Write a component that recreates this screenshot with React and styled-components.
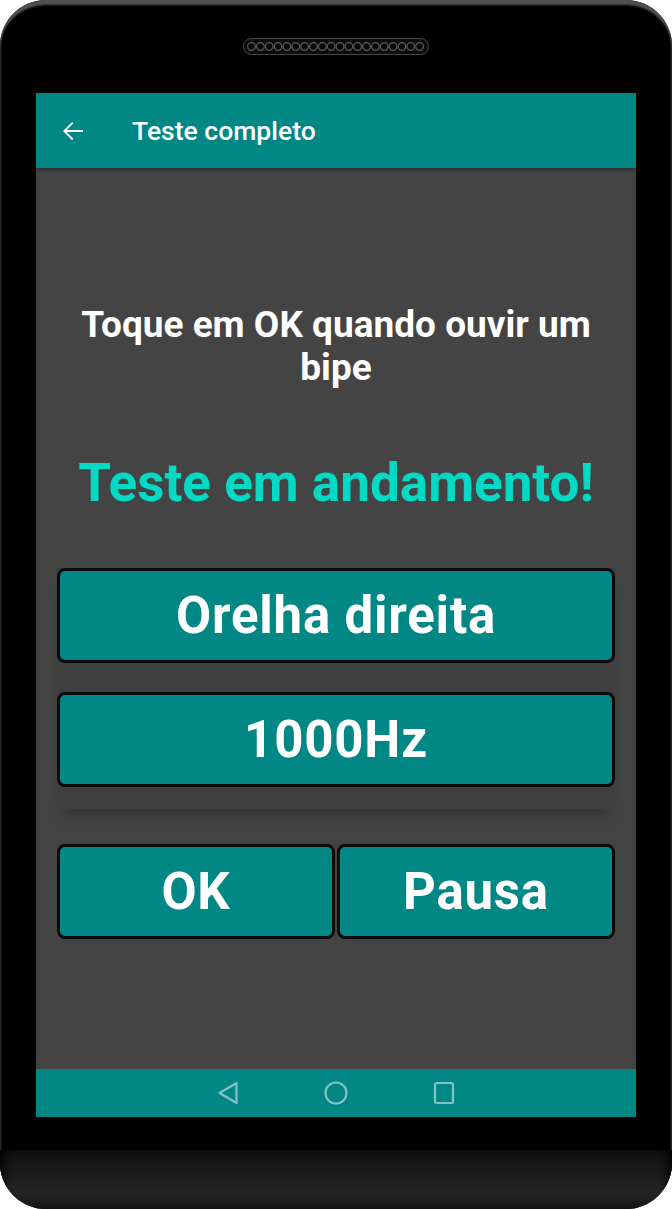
import React from "react";
import { createGlobalStyle, styled } from "styled-components";

const GlobalStyle = createGlobalStyle`
  html, body {
    margin: 0;
    padding: 0;
    background: #fff;
  }
  body {
    font-family: Roboto, "Noto Sans", sans-serif;
  }
`;

const Phone = styled.div`
  width: 672px;
  height: 1209px;
  box-sizing: border-box;
  display: flex;
  flex-direction: column;
  background: #000;
  border-radius: 46px;
  overflow: hidden;
  box-shadow: inset 0 6px 2px -1px #4f4f4f, inset 2px 0 2px -1px #3a3a3a,
    inset -2px 0 2px -1px #3a3a3a;
`;

const TopBezel = styled.div`
  height: 93px;
  flex-shrink: 0;
  display: flex;
  justify-content: center;
  padding-top: 38px;
  box-sizing: border-box;
`;

const Screen = styled.div`
  margin: 0 36px;
  height: 1024px;
  flex-shrink: 0;
  display: flex;
  flex-direction: column;
  background: #444444;
`;

const AppBar = styled.div`
  height: 75px;
  flex-shrink: 0;
  display: flex;
  align-items: center;
  background: #018784;
  color: #fff;
  box-shadow: 0 2px 4px rgba(0, 0, 0, 0.35);
  position: relative;
  z-index: 1;
`;

const BackButton = styled.div`
  width: 96px;
  display: flex;
  align-items: center;
  padding-left: 22px;
  box-sizing: border-box;
`;

const Title = styled.div`
  font-size: 26.5px;
  font-weight: 500;
`;

const Content = styled.div`
  flex: 1;
  display: flex;
  flex-direction: column;
  padding: 0 21px;
`;

const Prompt = styled.div`
  margin-top: 135px;
  text-align: center;
  color: #fff;
  font-size: 37px;
  font-weight: 700;
  line-height: 43px;
`;

const Status = styled.div`
  margin-top: 63px;
  text-align: center;
  color: #03dac5;
  font-size: 53px;
  font-weight: 700;
  line-height: 62px;
`;

const InfoCard = styled.div`
  margin-top: 54px;
  display: flex;
  flex-direction: column;
  gap: 29px;
  background: rgba(0, 0, 0, 0.07);
  box-shadow: 0 14px 14px -8px rgba(0, 0, 0, 0.28);
  padding-bottom: 22px;
`;

const Row = styled.div`
  margin-top: 35px;
  display: flex;
  gap: 2px;
`;

const TealButton = styled.div`
  flex: ${({ $grow }) => ($grow ? "1 1 0" : "0 0 auto")};
  height: 95px;
  box-sizing: border-box;
  display: flex;
  align-items: center;
  justify-content: center;
  background: #018784;
  border: 3px solid #0a0a0a;
  border-radius: 8px;
  color: #fff;
  font-size: 51px;
  letter-spacing: 0.8px;
  font-weight: 700;
`;

const NavBar = styled.div`
  height: 48px;
  flex-shrink: 0;
  display: flex;
  align-items: center;
  justify-content: center;
  gap: 85px;
  background: #018784;
`;

const Chin = styled.div`
  height: 33px;
  flex-shrink: 0;
`;

const Bottom = styled.div`
  flex: 1;
  background: linear-gradient(#111 0%, #1c1c1c 40%, #242424 70%, #1a1a1a 100%);
  box-shadow: inset 8px 0 10px -4px #000, inset -8px 0 10px -4px #000;
`;

const Speaker = () => (
  <svg width="186" height="17" viewBox="0 0 186 17">
    <rect x="0.5" y="0.5" width="185" height="16" rx="8" fill="#0c0c0c" stroke="#4a4a4a" />
    {Array.from({ length: 20 }).map((_, i) => (
      <circle key={i} cx={8.5 + i * 8.85} cy="8.5" r="3.8" fill="#050505" stroke="#5a5a5a" strokeWidth="1.3" />
    ))}
  </svg>
);

const ArrowBack = () => (
  <svg width="30" height="30" viewBox="0 0 24 24">
    <path d="M20 11.2H6.9l5.4-5.4-1.1-1.1L4 12l7.2 7.3 1.1-1.1-5.4-5.4H20z" fill="#fff" />
  </svg>
);

const navStroke = "rgba(255,255,255,0.5)";

const NavBack = () => (
  <svg width="22" height="24" viewBox="0 0 22 24">
    <path d="M19.5 2 L2.5 12 L19.5 22 Z" fill="none" stroke={navStroke} strokeWidth="2.2" strokeLinejoin="round" />
  </svg>
);

const NavHome = () => (
  <svg width="24" height="24" viewBox="0 0 24 24">
    <circle cx="12" cy="12" r="10.5" fill="none" stroke={navStroke} strokeWidth="2.2" />
  </svg>
);

const NavRecent = () => (
  <svg width="22" height="24" viewBox="0 0 22 24">
    <rect x="2" y="2" width="18" height="20" rx="1.5" fill="none" stroke={navStroke} strokeWidth="2.2" />
  </svg>
);

const App = () => {
  return (
    <>
      <GlobalStyle />
      <Phone>
        <TopBezel>
          <Speaker />
        </TopBezel>
        <Screen>
          <AppBar>
            <BackButton>
              <ArrowBack />
            </BackButton>
            <Title>Teste completo</Title>
          </AppBar>
          <Content>
            <Prompt>Toque em OK quando ouvir um bipe</Prompt>
            <Status>Teste em andamento!</Status>
            <InfoCard>
              <TealButton>Orelha direita</TealButton>
              <TealButton>1000Hz</TealButton>
            </InfoCard>
            <Row>
              <TealButton $grow>OK</TealButton>
              <TealButton $grow>Pausa</TealButton>
            </Row>
          </Content>
          <NavBar>
            <NavBack />
            <NavHome />
            <NavRecent />
          </NavBar>
        </Screen>
        <Chin />
        <Bottom />
      </Phone>
    </>
  );
};

export default App;
